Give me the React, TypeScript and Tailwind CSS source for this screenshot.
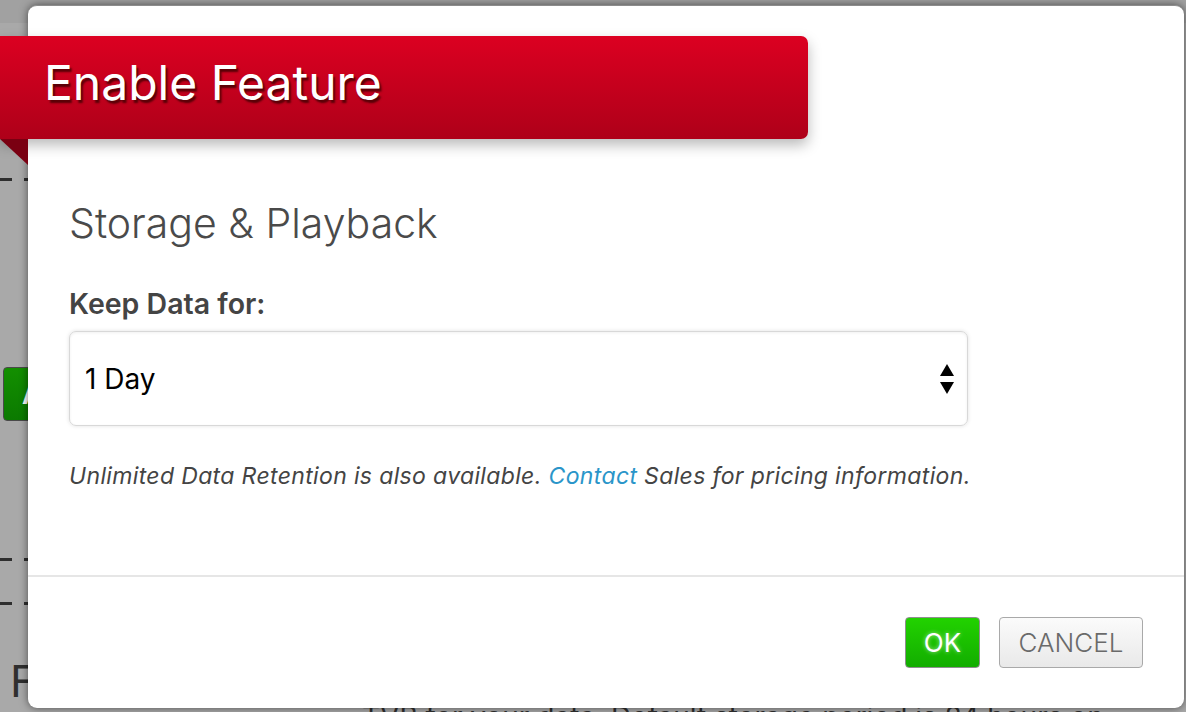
import React from "react";

export default function App() {
  return (
    <div
      className="relative w-[1186px] h-[712px] overflow-hidden bg-[#a9a9a9]"
      style={{ fontFamily: "Inter, 'Open Sans', sans-serif" }}
    >
      {/* page behind the overlay */}
      <div className="absolute left-0 top-0 w-full h-[23px] bg-[#a1a1a1]" />
      <div className="absolute left-0 top-[178px] flex gap-[12px]">
        <div className="w-[12px] h-[3px] bg-[#2e2e2e]" />
        <div className="w-[12px] h-[3px] bg-[#2e2e2e]" />
      </div>
      <div className="absolute left-0 top-[558px] flex gap-[12px]">
        <div className="w-[12px] h-[3px] bg-[#2e2e2e]" />
        <div className="w-[12px] h-[3px] bg-[#2e2e2e]" />
      </div>
      <div className="absolute left-0 top-[602px] flex gap-[12px]">
        <div className="w-[12px] h-[3px] bg-[#2e2e2e]" />
        <div className="w-[12px] h-[3px] bg-[#2e2e2e]" />
      </div>
      <div className="absolute left-[3px] top-[367px] w-[60px] h-[54px] rounded-[4px] border border-[#4a4a4a] bg-gradient-to-b from-[#138f00] to-[#0b7a00] text-white text-[26px] font-bold flex items-center pl-[18px]">
        A
      </div>
      <div className="absolute left-[10px] top-[648px] text-[44px] text-[#2f2f2f]">F</div>
      <div className="absolute left-[362px] top-[696px] whitespace-nowrap text-[28px] text-[#2f2f2f]">
        TVB for your data. Default storage period is 24 hours on
      </div>

      {/* modal */}
      <div className="absolute left-[28px] top-[5px] w-[1156px] h-[703px] bg-white rounded-[9px] border-t border-[#8c8c8c] shadow-[0_0_8px_rgba(0,0,0,0.55)] flex flex-col">
        <div className="pl-[41px] pr-[41px] pt-[193px] flex flex-col">
          <h2 className="text-[41px] leading-[48px] font-light text-[#4a4a4a]">Storage &amp; Playback</h2>
          <label className="mt-[39px] text-[28.5px] leading-[36px] font-semibold text-[#444]">Keep Data for:</label>
          <div className="mt-[9px] w-[899px] h-[95px] rounded-[7px] border border-[#d8d8d8] shadow-[0_0_4px_rgba(0,0,0,0.12),inset_0_1px_3px_rgba(0,0,0,0.06)] flex items-center justify-between pl-[15px] pr-[12px]">
            <span className="text-[28px] leading-[34px] text-black">1 Day</span>
            <svg width="16" height="30" viewBox="0 0 16 30">
              <polygon points="8,0 15,12 1,12" fill="#000" />
              <polygon points="1,18 15,18 8,30" fill="#000" />
            </svg>
          </div>
          <p className="mt-[36px] text-[23px] leading-[28px] italic text-[#444] tracking-[0.35px]">
            Unlimited Data Retention is also available. <span className="text-[#2a95c9]">Contact</span> Sales for pricing information.
          </p>
        </div>
        <div className="mt-auto mb-[40px]">
          <div className="h-[2px] bg-[#e6e6e6]" />
          <div className="flex justify-end gap-[19px] pr-[41px] pt-[40px]">
            <button className="w-[75px] h-[51px] rounded-[4px] border border-[#8f8f8f] bg-gradient-to-b from-[#22d200] to-[#12ad00] text-white text-[26px] [text-shadow:0_0_4px_rgba(255,255,255,0.6)]">
              OK
            </button>
            <button className="w-[144px] h-[51px] rounded-[4px] border border-[#a9a9a9] bg-gradient-to-b from-[#fbfbfb] to-[#e9e9e9] text-[#6a6a6a] text-[26px] font-light">
              CANCEL
            </button>
          </div>
        </div>
      </div>

      {/* ribbon */}
      <div className="absolute left-0 top-[36px] w-[808px] h-[103px] rounded-r-[7px] bg-gradient-to-b from-[#dc0021] to-[#ae0019] shadow-[0_6px_14px_rgba(0,0,0,0.28)] flex items-center pl-[44px] pb-[10px]">
        <span className="text-[48px] leading-[56px] text-white [text-shadow:2px_3px_2px_rgba(60,0,0,0.8)]">Enable Feature</span>
      </div>
      <svg className="absolute left-0 top-[139px]" width="28" height="26" viewBox="0 0 28 26">
        <polygon points="0,0 28,0 28,26" fill="#7a0012" />
      </svg>
    </div>
  );
}
